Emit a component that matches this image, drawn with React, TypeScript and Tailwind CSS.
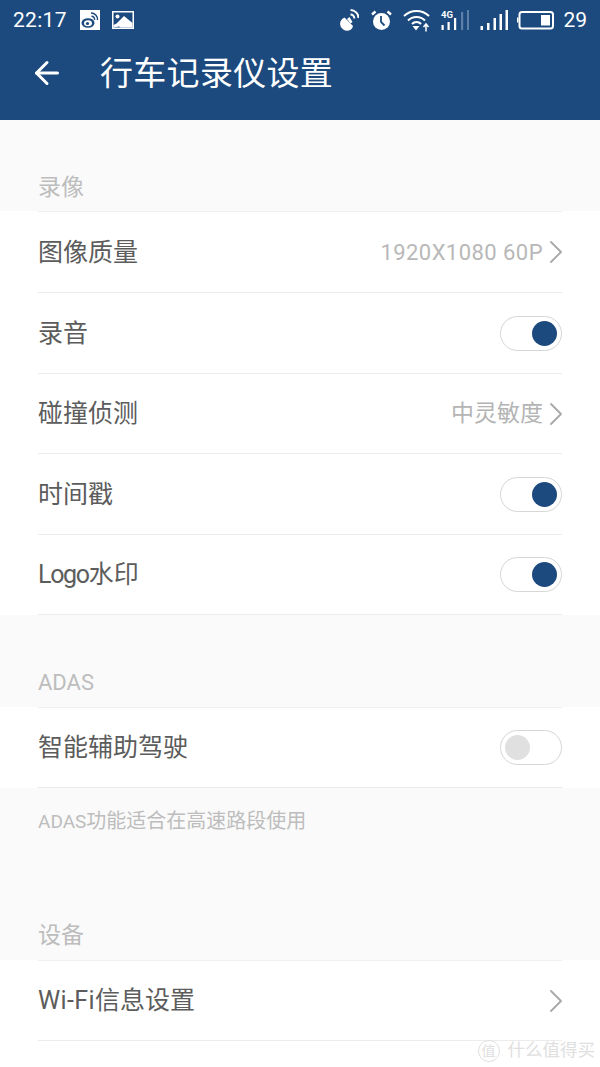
import React from 'react';
import { ArrowLeft, ChevronRight } from 'lucide-react';

const CJK = 'font-["Roboto","Noto_Sans_CJK_SC",sans-serif]';

const Toggle = ({ on }: { on: boolean }) => (
    <div className={`flex h-[35px] w-[62px] items-center rounded-full border border-[#d6d6d6] bg-white px-[4px] ${on ? 'justify-end' : 'justify-start'}`}>
        <div className={`h-[25px] w-[25px] rounded-full ${on ? 'bg-[#1c4a7e]' : 'bg-[#e0e0e0]'}`} />
    </div>
);

const Row = ({ label, h, children }: { label: React.ReactNode; h: string; children?: React.ReactNode }) => (
    <div className="bg-white px-[38px]">
        <div className={`flex items-center justify-between border-b border-[#ececec] ${h}`}>
            <span className="text-[25px] leading-none text-[#5c5c5c]">{label}</span>
            <div className="flex items-center">{children}</div>
        </div>
    </div>
);

const Value = ({ children }: { children?: React.ReactNode }) => (
    <>
        {children}
        {/* icon box is 40px, the stroke only fills the middle 10px */}
        <ChevronRight className="-ml-[7px] -mr-[14px] h-[40px] w-[40px] text-[#a8a8a8]" strokeWidth={1.1} />
    </>
);

const SectionTitle = ({ title, h, size = 'text-[23px]', pb = 'pb-[12px]' }: { title: string; h: string; size?: string; pb?: string }) => (
    <div className={`flex items-end px-[38px] leading-none text-[#bdbdbd] ${pb} ${size} ${h}`}>{title}</div>
);

const TopLine = () => (
    <div className="bg-white px-[38px]">
        <div className="border-t border-[#f0f0f0]" />
    </div>
);

const StatusBar = () => (
    <div className="flex h-[40px] items-center justify-between pl-[13px] pr-[13px] text-white">
        <div className="flex items-center">
            <span className="text-[21px] leading-none tracking-[0.3px]">22:17</span>
            <svg className="ml-[13px]" width="20" height="20" viewBox="0 0 20 20">
                <rect width="20" height="20" fill="#fff" />
                <ellipse cx="8" cy="13" rx="6.5" ry="4.800" fill="#1c4a7e" />
                <ellipse cx="8" cy="13.200" rx="4" ry="3" fill="#fff" />
                <circle cx="7.500" cy="13.500" r="1.600" fill="#1c4a7e" />
                <path d="M11 3a6.500 6.500 0 0 1 6.500 7M11.500 6.300a3 3 0 0 1 3 3.500" stroke="#1c4a7e" strokeWidth="1.500" fill="none" />
            </svg>
            <svg className="ml-[12px]" width="22" height="18" viewBox="0 0 22 18">
                <rect width="22" height="18" fill="#fff" />
                <rect x="1.500" y="1.500" width="19" height="15" fill="#1c4a7e" />
                <path d="M1.500 16.500V14l3-1.500L12 5l8.500 7v4.500H9l-2-1z" fill="#fff" />
                <circle cx="5.500" cy="5.500" r="2" fill="#fff" />
            </svg>
        </div>
        <div className="flex items-center">
            {/* dish */}
            <svg width="19" height="24" viewBox="0 0 19 24" fill="none">
                <path d="M4.500 9.500 13 18a6.500 6.500 0 0 1-2 3.500A7 7 0 0 1 .5 13.500 7 7 0 0 1 4.500 9.500z" fill="#fff" />
                <path d="M7 11l2.500-2 3 5-2 1.500z" fill="#fff" />
                <path d="M10.500 2a8 8 0 0 1 8 8M10.500 6.500a3.800 3.800 0 0 1 3.800 4" stroke="#fff" strokeWidth="2" />
            </svg>
            {/* alarm */}
            <svg className="ml-[12px]" width="21" height="24" viewBox="0 0 21 24" fill="none">
                <circle cx="10.500" cy="13.500" r="8.500" fill="#fff" />
                <path d="M10 8v6l3.500 3.500" stroke="#1c4a7e" strokeWidth="1.800" />
                <path d="M1 6.500 4.500 3.500M20 6.500l-3.500-3" stroke="#fff" strokeWidth="2.400" />
            </svg>
            {/* wifi */}
            <svg className="ml-[11px]" width="27" height="24" viewBox="0 0 27 24" fill="none">
                <path d="M1 8a18 18 0 0 1 25 0M5 12.500a12 12 0 0 1 17 0M9 16a6 6 0 0 1 9 0" stroke="#fff" strokeWidth="2" />
                <path d="M9.500 18h7l-3.500 4.500z" fill="#fff" />
                <path d="M23 23.500v-6.500M20.500 19l2.500-3 2.500 3" stroke="#fff" strokeWidth="1.500" />
            </svg>
            {/* 4G signal */}
            <svg className="ml-[11px]" width="28" height="24" viewBox="0 0 28 24">
                <text x="0" y="10" fontSize="9.500" fontWeight="700" fill="#fff" fontFamily="Roboto, sans-serif">4G</text>
                <rect x="0.500" y="17" width="2.200" height="5" fill="#fff" />
                <rect x="6.500" y="14" width="2.200" height="8" fill="#fff" />
                <rect x="13" y="10" width="2.200" height="12" fill="#fff" />
                <rect x="20" y="4" width="2.200" height="18" fill="#5d80a8" />
                <rect x="26" y="2" width="2" height="20" fill="#5d80a8" />
            </svg>
            {/* sim 2 signal */}
            <svg className="ml-[11px]" width="28" height="24" viewBox="0 0 28 24">
                <rect x="0.500" y="18" width="2.500" height="4" fill="#fff" />
                <rect x="7" y="15" width="2.500" height="7" fill="#fff" />
                <rect x="13.500" y="10" width="2.500" height="12" fill="#fff" />
                <rect x="19.500" y="6" width="2.500" height="16" fill="#fff" />
                <rect x="25.500" y="2" width="2.500" height="20" fill="#fff" />
            </svg>
            {/* battery */}
            <svg className="ml-[9px]" width="37" height="20" viewBox="0 0 37 20" fill="none">
                <rect x="2.500" y="2" width="33.500" height="16.500" rx="2.500" stroke="#fff" strokeWidth="2" />
                <rect x="0" y="7.500" width="1.500" height="5" fill="#fff" />
                <rect x="24" y="5" width="9" height="10.500" fill="#fff" />
            </svg>
            <span className="ml-[9px] text-[21px] leading-none">29</span>
        </div>
    </div>
);

export default function App() {
    return (
        <div className={`relative flex h-[1067px] w-[600px] flex-col overflow-hidden bg-[#fafafa] ${CJK}`}>
            <div className="h-[120px] bg-[#1c4a7e]">
                <StatusBar />
                <div className="flex h-[66px] items-center pl-[29px] text-white">
                    <ArrowLeft className="h-[36px] w-[36px]" strokeWidth={2} />
                    <span className="ml-[35px] text-[33px] leading-none tracking-[0.3px]">行车记录仪设置</span>
                </div>
            </div>

            <SectionTitle title="录像" h="h-[91px]" />
            <TopLine />
            <Row label="图像质量" h="h-[81px]">
                <Value><span className="pt-[2px] text-[22px] leading-none tracking-[0.45px] text-[#b8b8b8]">1920X1080 60P</span></Value>
            </Row>
            <Row label="录音" h="h-[81px]"><Toggle on /></Row>
            <Row label="碰撞侦测" h="h-[80px]">
                <Value><span className="text-[23px] leading-none text-[#b4b4b4]">中灵敏度</span></Value>
            </Row>
            <Row label="时间戳" h="h-[81px]"><Toggle on /></Row>
            <Row label={<><span className="tracking-[-1.300px]">Logo</span>水印</>} h="h-[80px]"><Toggle on /></Row>

            <SectionTitle title="ADAS" h="h-[92px]" size="text-[22px]" pb="pb-[13px]" />
            <TopLine />
            <Row label="智能辅助驾驶" h="h-[80px]"><Toggle on={false} /></Row>
            <div className="flex h-[67px] items-center px-[38px] pb-[1px] text-[20px] leading-none text-[#bdbdbd]">
                <span className="text-[19px]">ADAS</span>功能适合在高速路段使用
            </div>

            <SectionTitle title="设备" h="h-[105px]" pb="pb-[13px]" />
            <TopLine />
            <Row label={<><span className="tracking-[0.4px]">Wi-Fi</span>信息设置</>} h="h-[80px]"><Value /></Row>
            <div className="flex-1 bg-white" />

            <div className="absolute bottom-[5px] right-[5px] flex items-center text-[#e0e0e0]">
                <div className="flex h-[22px] w-[22px] items-center justify-center rounded-full border border-[#e0e0e0] text-[14px] leading-none">值</div>
                <span className="ml-[8px] text-[17.500px] leading-none">什么值得买</span>
            </div>
        </div>
    );
}
